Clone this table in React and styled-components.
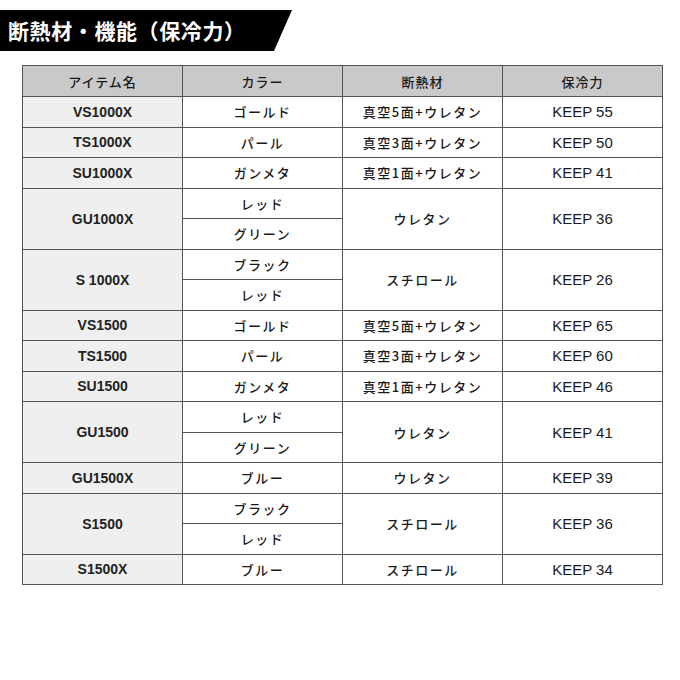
import React from 'react';
import styled, { createGlobalStyle } from 'styled-components';

const rows = [
  { name: 'VS1000X', colors: ['ゴールド'], material: '真空5面+ウレタン', keep: 'KEEP 55' },
  { name: 'TS1000X', colors: ['パール'], material: '真空3面+ウレタン', keep: 'KEEP 50' },
  { name: 'SU1000X', colors: ['ガンメタ'], material: '真空1面+ウレタン', keep: 'KEEP 41' },
  { name: 'GU1000X', colors: ['レッド', 'グリーン'], material: 'ウレタン', keep: 'KEEP 36' },
  { name: 'S 1000X', colors: ['ブラック', 'レッド'], material: 'スチロール', keep: 'KEEP 26' },
  { name: 'VS1500', colors: ['ゴールド'], material: '真空5面+ウレタン', keep: 'KEEP 65' },
  { name: 'TS1500', colors: ['パール'], material: '真空3面+ウレタン', keep: 'KEEP 60' },
  { name: 'SU1500', colors: ['ガンメタ'], material: '真空1面+ウレタン', keep: 'KEEP 46' },
  { name: 'GU1500', colors: ['レッド', 'グリーン'], material: 'ウレタン', keep: 'KEEP 41' },
  { name: 'GU1500X', colors: ['ブルー'], material: 'ウレタン', keep: 'KEEP 39' },
  { name: 'S1500', colors: ['ブラック', 'レッド'], material: 'スチロール', keep: 'KEEP 36' },
  { name: 'S1500X', colors: ['ブルー'], material: 'スチロール', keep: 'KEEP 34' },
];

function App() {
  return (
    <>
      <GlobalStyle />
      <Banner>断熱材・機能（保冷力）</Banner>
      <Table>
        <colgroup>
          <col width="160" />
          <col width="160" />
          <col width="160" />
          <col width="160" />
        </colgroup>
        <thead>
          <tr>
            <Th>アイテム名</Th>
            <Th>カラー</Th>
            <Th>断熱材</Th>
            <Th>保冷力</Th>
          </tr>
        </thead>
        <tbody>
          {rows.map((row) =>
            row.colors.map((color, i) => (
              <tr key={row.name + color}>
                {i === 0 && (
                  <NameCell rowSpan={row.colors.length}>{row.name}</NameCell>
                )}
                <Td $kana>{color}</Td>
                {i === 0 && (
                  <>
                    <Td rowSpan={row.colors.length} $kana>{row.material}</Td>
                    <Td rowSpan={row.colors.length}>{row.keep}</Td>
                  </>
                )}
              </tr>
            ))
          )}
        </tbody>
      </Table>
    </>
  );
}

const GlobalStyle = createGlobalStyle`
  body {
    margin: 0;
    background: #fff;
    font-family: "Liberation Sans", "Noto Sans CJK JP", sans-serif;
    color: #1a1a1a;
  }
`;

const Banner = styled.div`
  margin-top: 10px;
  width: 292px;
  height: 41px;
  box-sizing: border-box;
  padding-left: 8px;
  background: #000;
  color: #fff;
  font-family: "Noto Sans CJK JP", sans-serif;
  font-weight: 700;
  font-size: 21px;
  line-height: 41px;
  letter-spacing: 0.6px;
  clip-path: polygon(0 0, 100% 0, 274px 100%, 0 100%);
`;

const Table = styled.table`
  margin: 14px 0 0 22px;
  width: 640px;
  table-layout: fixed;
  border-collapse: collapse;
  border: 1px solid #555;
`;

const Th = styled.th`
  height: 30px;
  padding: 0;
  background: #c9c9c9;
  border: 1px solid #555;
  font-family: "Noto Sans CJK JP", sans-serif;
  font-weight: 500;
  font-size: 13px;
  letter-spacing: 1px;
  text-align: center;
  vertical-align: middle;
`;

const Td = styled.td`
  height: 29.5px;
  padding: 0;
  border: 1px solid #555;
  font-size: ${(p) => (p.$kana ? '13px' : '15px')};
  font-family: ${(p) =>
    p.$kana ? '"Noto Sans CJK JP", sans-serif' : '"Liberation Sans", sans-serif'};
  font-weight: ${(p) => (p.$kana ? 500 : 400)};
  letter-spacing: ${(p) => (p.$kana ? '1.5px' : '0')};
  text-align: center;
  vertical-align: middle;
`;

const NameCell = styled(Td)`
  background: #efefef;
  font-size: 14px;
  font-weight: 700;
  color: #222;
`;

export default App;
